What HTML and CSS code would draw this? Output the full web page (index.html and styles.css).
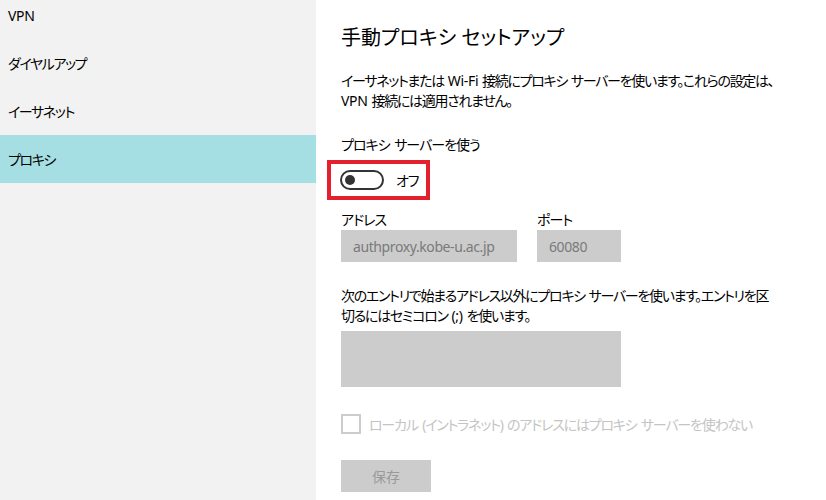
FILE: index.html
```html
<!DOCTYPE html>
<html lang="ja">
<head>
<meta charset="utf-8">
<link rel="stylesheet" href="styles.css">
</head>
<body>
<div class="app">
  <nav class="sidebar">
    <ul class="nav-list">
      <li class="nav-item"><span class="latin">VPN</span></li>
      <li class="nav-item">ダイヤルアップ</li>
      <li class="nav-item">イーサネット</li>
      <li class="nav-item selected">プロキシ</li>
    </ul>
  </nav>
  <main class="content">
    <h1 class="title">手動プロキシ セットアップ</h1>
    <p class="desc">イーサネットまたは <span class="latin">Wi-Fi</span> 接続にプロキシ サーバーを使います。これらの設定は、<br><span class="latin">VPN</span> 接続には適用されません。</p>
    <div class="label use-label">プロキシ サーバーを使う</div>
    <div class="highlight">
      <span class="toggle"><span class="knob"></span></span>
      <span class="toggle-text">オフ</span>
    </div>
    <div class="fields">
      <div class="field">
        <div class="label">アドレス</div>
        <div class="input addr">authproxy.kobe-u.ac.jp</div>
      </div>
      <div class="field">
        <div class="label">ポート</div>
        <div class="input port">60080</div>
      </div>
    </div>
    <p class="desc exc">次のエントリで始まるアドレス以外にプロキシ サーバーを使います。エントリを区<br>切るにはセミコロン <span class="latin">(;)</span> を使います。</p>
    <div class="textarea"></div>
    <div class="check-row">
      <span class="checkbox"></span>
      <span class="check-label">ローカル (イントラネット) のアドレスにはプロキシ サーバーを使わない</span>
    </div>
    <div class="button">保存</div>
  </main>
</div>
</body>
</html>
```

FILE: styles.css
```css
* { box-sizing: border-box; }
html, body { margin: 0; padding: 0; }
body {
  width: 826px;
  height: 500px;
  overflow: hidden;
  font-family: "Noto Sans", "Noto Sans CJK JP", sans-serif;
  font-feature-settings: "palt";
  color: #000;
  background: #fff;
}
.latin {
  letter-spacing: -0.3px;
}
.app {
  display: flex;
  height: 500px;
}
.sidebar {
  width: 316px;
  flex: none;
  background: #f2f2f2;
  overflow: hidden;
}
.nav-list {
  list-style: none;
  margin: -9px 0 0 0;
  padding: 0;
}
.nav-item {
  height: 48px;
  display: flex;
  align-items: center;
  padding-left: 8px;
  font-size: 14px;
  letter-spacing: -1.4px;
}
.nav-item.selected {
  background: #a5dfe3;
}
.content {
  flex: 1;
  padding: 24px 0 0 25px;
}
.title {
  margin: 0;
  font-size: 20px;
  font-weight: 400;
  line-height: 28px;
}
.desc {
  margin: 19px 0 0 0;
  font-size: 14px;
  line-height: 20px;
  letter-spacing: -1.3px;
  word-spacing: 1.5px;
}
.label {
  font-size: 14px;
  line-height: 20px;
  letter-spacing: -1px;
  word-spacing: 2px;
}
.use-label {
  margin-top: 24px;
}
.highlight {
  margin: 5px 0 0 -14px;
  width: 103px;
  height: 40px;
  border: 4px solid #e5202e;
  display: flex;
  align-items: center;
  padding-left: 9px;
}
.toggle {
  width: 44px;
  height: 20px;
  border: 2px solid #333;
  border-radius: 10px;
  display: flex;
  align-items: center;
  padding-left: 3px;
}
.knob {
  width: 10px;
  height: 10px;
  border-radius: 50%;
  background: #333;
}
.toggle-text {
  margin-left: 12px;
  font-size: 14px;
  letter-spacing: -1px;
}
.fields {
  display: flex;
  gap: 20px;
  margin-top: 10px;
}
.input {
  height: 32px;
  background: #cccccc;
  color: #7a7a7a;
  font-size: 14px;
  letter-spacing: -0.4px;
  display: flex;
  align-items: center;
  padding-left: 12px;
}
.addr { width: 176px; }
.port { width: 84px; }
.exc { margin-top: 24px; }
.textarea {
  width: 280px;
  height: 56px;
  background: #cccccc;
  margin-top: 5px;
}
.check-row {
  display: flex;
  align-items: center;
  margin-top: 27px;
}
.checkbox {
  width: 20px;
  height: 20px;
  border: 2px solid #cccccc;
}
.check-label {
  margin-left: 8px;
  font-size: 14px;
  letter-spacing: -1.2px;
  word-spacing: 2px;
  color: #c4c4c4;
}
.button {
  margin-top: 26px;
  width: 90px;
  height: 32px;
  background: #cccccc;
  color: #9a9a9a;
  font-size: 14px;
  display: flex;
  align-items: center;
  justify-content: center;
}
```
